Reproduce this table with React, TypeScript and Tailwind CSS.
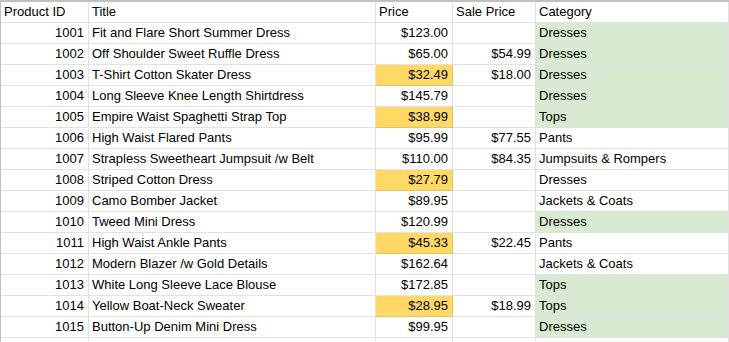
import React from 'react';

type Row = {
  id: number;
  title: string;
  price: string;
  sale?: string;
  category: string;
  cheap?: boolean;
  green?: boolean;
};

const rows: Row[] = [
  { id: 1001, title: 'Fit and Flare Short Summer Dress', price: '$123.00', category: 'Dresses', green: true },
  { id: 1002, title: 'Off Shoulder Sweet Ruffle Dress', price: '$65.00', sale: '$54.99', category: 'Dresses', green: true },
  { id: 1003, title: 'T-Shirt Cotton Skater Dress', price: '$32.49', sale: '$18.00', category: 'Dresses', cheap: true, green: true },
  { id: 1004, title: 'Long Sleeve Knee Length Shirtdress', price: '$145.79', category: 'Dresses', green: true },
  { id: 1005, title: 'Empire Waist Spaghetti Strap Top', price: '$38.99', category: 'Tops', cheap: true, green: true },
  { id: 1006, title: 'High Waist Flared Pants', price: '$95.99', sale: '$77.55', category: 'Pants' },
  { id: 1007, title: 'Strapless Sweetheart Jumpsuit /w Belt', price: '$110.00', sale: '$84.35', category: 'Jumpsuits & Rompers' },
  { id: 1008, title: 'Striped Cotton Dress', price: '$27.79', category: 'Dresses', cheap: true },
  { id: 1009, title: 'Camo Bomber Jacket', price: '$89.95', category: 'Jackets & Coats' },
  { id: 1010, title: 'Tweed Mini Dress', price: '$120.99', category: 'Dresses', green: true },
  { id: 1011, title: 'High Waist Ankle Pants', price: '$45.33', sale: '$22.45', category: 'Pants', cheap: true },
  { id: 1012, title: 'Modern Blazer /w Gold Details', price: '$162.64', category: 'Jackets & Coats' },
  { id: 1013, title: 'White Long Sleeve Lace Blouse', price: '$172.85', category: 'Tops', green: true },
  { id: 1014, title: 'Yellow Boat-Neck Sweater', price: '$28.95', sale: '$18.99', category: 'Tops', cheap: true, green: true },
  { id: 1015, title: 'Button-Up Denim Mini Dress', price: '$99.95', category: 'Dresses', green: true },
];

const cell = 'h-[21px] border-r border-b border-[#e2e2e2] px-[3px] leading-[20px] whitespace-nowrap overflow-hidden';

export default function App() {
  return (
    <div className="w-[729px] h-[342px] overflow-hidden bg-white font-['Liberation_Sans',Arial,sans-serif] text-[13px] text-black">
      <div className="grid grid-cols-[88px_287px_77px_83px_193px] border-l border-t-2 border-[#c0c0c0]">
        <div className={cell}>Product ID</div>
        <div className={cell}>Title</div>
        <div className={cell}>Price</div>
        <div className={cell}>Sale Price</div>
        <div className={cell}>Category</div>

        {rows.map((r) => (
          <React.Fragment key={r.id}>
            <div className={`${cell} text-right pr-[4px]`}>{r.id}</div>
            <div className={cell}>{r.title}</div>
            <div className={`${cell} text-right pr-[4px] ${r.cheap ? 'bg-[#ffd966] border-[#e6c35c]' : ''}`}>{r.price}</div>
            <div className={`${cell} text-right pr-[4px]`}>{r.sale ?? ''}</div>
            <div className={`${cell} ${r.green ? 'bg-[#d9ead3] border-[#c3d4be]' : ''}`}>{r.category}</div>
          </React.Fragment>
        ))}

        <div className={cell}></div>
        <div className={cell}></div>
        <div className={cell}></div>
        <div className={cell}></div>
        <div className={cell}></div>
      </div>
    </div>
  );
}
